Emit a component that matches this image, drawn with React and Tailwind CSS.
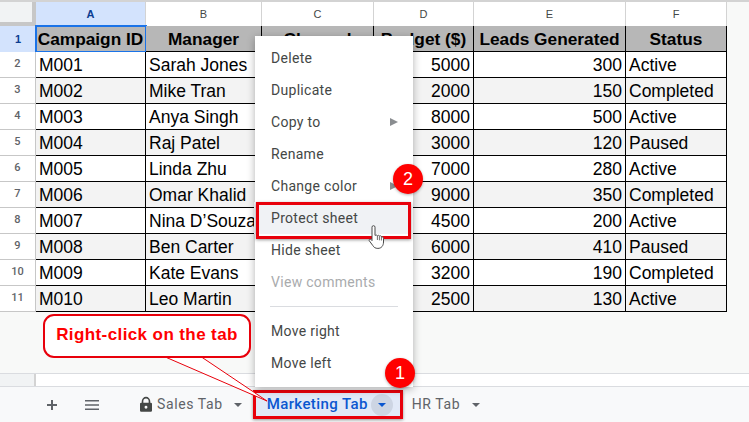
import React from 'react';

const rows = [
  ['M001', 'Sarah Jones', '', '5000', '300', 'Active'],
  ['M002', 'Mike Tran', '', '2000', '150', 'Completed'],
  ['M003', 'Anya Singh', '', '8000', '500', 'Active'],
  ['M004', 'Raj Patel', '', '3000', '120', 'Paused'],
  ['M005', 'Linda Zhu', '', '7000', '280', 'Active'],
  ['M006', 'Omar Khalid', '', '9000', '350', 'Completed'],
  ['M007', 'Nina D’Souza', '', '4500', '200', 'Active'],
  ['M008', 'Ben Carter', '', '6000', '410', 'Paused'],
  ['M009', 'Kate Evans', '', '3200', '190', 'Completed'],
  ['M010', 'Leo Martin', '', '2500', '130', 'Active'],
];

const heads = ['Campaign ID', 'Manager', 'Channel', 'Budget ($)', 'Leads Generated', 'Status'];
const letters = ['A', 'B', 'C', 'D', 'E', 'F'];
const gridCols = 'grid grid-cols-[36px_110px_116px_112px_100px_152px_101px]';

function SheetGrid() {
  return (
    <div className="h-[373px] bg-[#f8f9f8] border-t-2 border-[#d3d3d3]">
      <div className={gridCols}>
        <div className="h-6 bg-[#f1f3f4] border-r-4 border-b-4 border-[#c7c7c7]" />
        {letters.map((l, i) => (
          <div
            key={l}
            className={`h-6 flex items-center justify-center text-[11px] border-r border-[#d3d3d3] ${
              i === 0 ? 'bg-[#d3e3fd] font-bold text-[#0b3d91]' : 'bg-white text-[#444746]'
            }`}
          >
            {l}
          </div>
        ))}
      </div>
      <div className={gridCols}>
        <div className="h-[26px] bg-[#d3e3fd] flex items-center justify-center text-[11px] font-bold text-[#0b3d91]">1</div>
        {heads.map((h, i) => (
          <div
            key={h}
            className={`h-[26px] pt-0.5 bg-[#b7b7b7] flex items-center justify-center text-[17.3px] font-bold text-black whitespace-nowrap border-r border-b border-black ${
              i === 0 ? 'outline-2 -outline-offset-1 outline-[#1a73e8]' : ''
            }`}
          >
            {h}
          </div>
        ))}
      </div>
      {rows.map((r, i) => (
        <div key={r[0]} className={gridCols}>
          <div className="h-[26px] bg-white flex items-center justify-center text-[11px] font-medium font-['Roboto',sans-serif] text-[#5f6368] border-r border-b border-[#c7c7c7]">
            {i + 2}
          </div>
          {r.map((c, j) => (
            <div
              key={j}
              className={`h-[26px] pt-0.5 pl-[3px] pr-[3px] flex items-center text-[17.5px] text-black whitespace-nowrap overflow-hidden border-r border-b border-black ${
                i % 2 === 1 ? 'bg-[#f3f3f3]' : 'bg-white'
              } ${j === 3 || j === 4 ? 'justify-end' : ''} ${j === 1 ? 'pl-1' : ''}`}
            >
              {c}
            </div>
          ))}
        </div>
      ))}
    </div>
  );
}

function Caret({ className }) {
  return (
    <svg className={className} width="8" height="4" viewBox="0 0 8 4">
      <path d="M0 0h8L4 4z" fill="currentColor" />
    </svg>
  );
}

function TabBar() {
  return (
    <div className="h-9 bg-[#f8f9fa] border-t border-[#dadce0] flex items-center font-['Roboto',sans-serif] text-[14px] tracking-[0.6px]">
      <svg className="ml-[46px]" width="12" height="12" viewBox="0 0 12 12">
        <path d="M5 1h2v4h4v2H7v4H5V7H1V5h4z" fill="#5f6368" />
      </svg>
      <svg className="ml-[27px]" width="14" height="10" viewBox="0 0 14 10">
        <path d="M0 0h14v1.6H0zM0 4.2h14v1.6H0zM0 8.4h14V10H0z" fill="#5f6368" />
      </svg>
      <svg className="ml-[41px]" width="12" height="17" viewBox="0 0 14 17">
        <path d="M2 6.5V4.6a5 5 0 0 1 10 0v1.9h.6A1.4 1.4 0 0 1 14 8v7.6a1.4 1.4 0 0 1-1.4 1.4H1.4A1.4 1.4 0 0 1 0 15.6V8a1.4 1.4 0 0 1 1.4-1.5zm1.9 0h6.2V4.6a3.1 3.1 0 0 0-6.2 0zM7 10a1.7 1.7 0 1 0 0 3.4A1.7 1.7 0 0 0 7 10z" fill="#444746" />
      </svg>
      <span className="ml-[5px] text-[#5f6368]">Sales Tab</span>
      <Caret className="ml-[11px] text-[#5f6368]" />
      <div className="ml-[11px] h-[29px] w-[150px] flex items-center pl-[11px] bg-[#e1e9f7] border-[3px] border-[#e8000b] shadow-[0_1px_3px_rgba(0,0,0,0.4)]">
        <span className="font-medium text-[15px] tracking-[0.4px] text-[#0b57d0] whitespace-nowrap">Marketing Tab</span>
        <span className="ml-[3px] w-[22px] h-[22px] rounded-full bg-[#cdd5e3] flex items-center justify-center shrink-0">
          <Caret className="text-[#0b57d0]" />
        </span>
      </div>
      <span className="ml-[9px] text-[#5f6368]">HR Tab</span>
      <Caret className="ml-[12px] text-[#5f6368]" />
    </div>
  );
}

function MenuItem({ label, arrow, muted }) {
  return (
    <div className={`h-8 pl-4 pr-[15px] flex items-center justify-between ${muted ? 'text-[#a9abad]' : 'text-[#444746]'}`}>
      <span>{label}</span>
      {arrow && (
        <svg width="8" height="8" viewBox="0 0 8 8">
          <path d="M0 0l8 4-8 4z" fill="#8a8d90" />
        </svg>
      )}
    </div>
  );
}

function ContextMenu() {
  return (
    <div className="absolute left-[255px] top-[36px] w-[158px] h-[351px] pt-1.5 bg-white shadow-[0_2px_8px_rgba(0,0,0,0.3)] font-['Roboto',sans-serif] text-[14px] tracking-[0.3px]">
      <MenuItem label="Delete" />
      <MenuItem label="Duplicate" />
      <MenuItem label="Copy to" arrow />
      <MenuItem label="Rename" />
      <MenuItem label="Change color" arrow />
      <div className="h-8 -ml-px mr-[3px] pl-[17px] flex items-center text-[#444746] bg-[#f0f2f5]">Protect sheet</div>
      <MenuItem label="Hide sheet" />
      <MenuItem label="View comments" muted />
      <div className="mx-[15px] my-2 border-t border-[#dadce0]" />
      <MenuItem label="Move right" />
      <MenuItem label="Move left" />
    </div>
  );
}

function Badge({ n, className }) {
  return (
    <div className={`absolute w-[30px] h-[30px] rounded-full bg-[#f00] text-white text-[18px] flex items-center justify-center shadow-[0_1px_3px_rgba(0,0,0,0.3)] ${className}`}>
      {n}
    </div>
  );
}

export default function App() {
  return (
    <div className="relative w-[749px] h-[422px] overflow-hidden bg-[#f8f9fa] font-['Liberation_Sans',sans-serif]">
      <SheetGrid />
      <div className="h-[13px] bg-white border-t border-[#dadce0] flex">
        <div className="w-9 h-full bg-[#f1f3f4] border-r-2 border-[#d3d3d3]" />
      </div>
      <TabBar />
      <ContextMenu />

      {/* Protect sheet highlight */}
      <div className="absolute left-[256px] top-[202px] w-[155px] h-[37px] border-[3px] border-[#e8000b] shadow-[0_1px_3px_rgba(0,0,0,0.4)]" />

      {/* Hand cursor */}
      <svg className="absolute left-[368px] top-[225px]" width="19" height="25" viewBox="0 0 19 25">
        <path d="M4 2.2a1.5 1.5 0 0 1 3 0v8.2l.8-.2a1.3 1.3 0 0 1 1.6.5 1.4 1.4 0 0 1 2 .3 1.4 1.4 0 0 1 2 .6c1.2 0 2.1.8 2.1 2V17c0 3.6-2 6.4-5.6 6.4-2.6 0-4-1-5.2-3L1.2 15.6c-.5-1 .8-2 1.6-1.2L4 15.6z" fill="#fff" stroke="#4a4a4a" strokeWidth="1" />
        <path d="M9.4 11v4M11.4 11.3v4M13.4 11.9v3.6" fill="none" stroke="#4a4a4a" strokeWidth="0.8" />
      </svg>

      {/* Callout */}
      <svg className="absolute left-0 top-[350px]" width="270" height="55" viewBox="0 0 270 55">
        <path d="M163 6L267 51 200 6z" fill="#fff" stroke="#e8000b" strokeWidth="1" />
      </svg>
      <div className="absolute left-[43px] top-[314px] w-[208px] h-[44px] pb-[3px] rounded-[11px] bg-white border-[2.5px] border-[#e8000b] text-[#f00] font-bold text-[17px] flex items-center justify-center tracking-[0.4px]">
        Right-click on the tab
      </div>

      <Badge n="1" className="left-[385px] top-[358px]" />
      <Badge n="2" className="left-[393px] top-[164px]" />
    </div>
  );
}
